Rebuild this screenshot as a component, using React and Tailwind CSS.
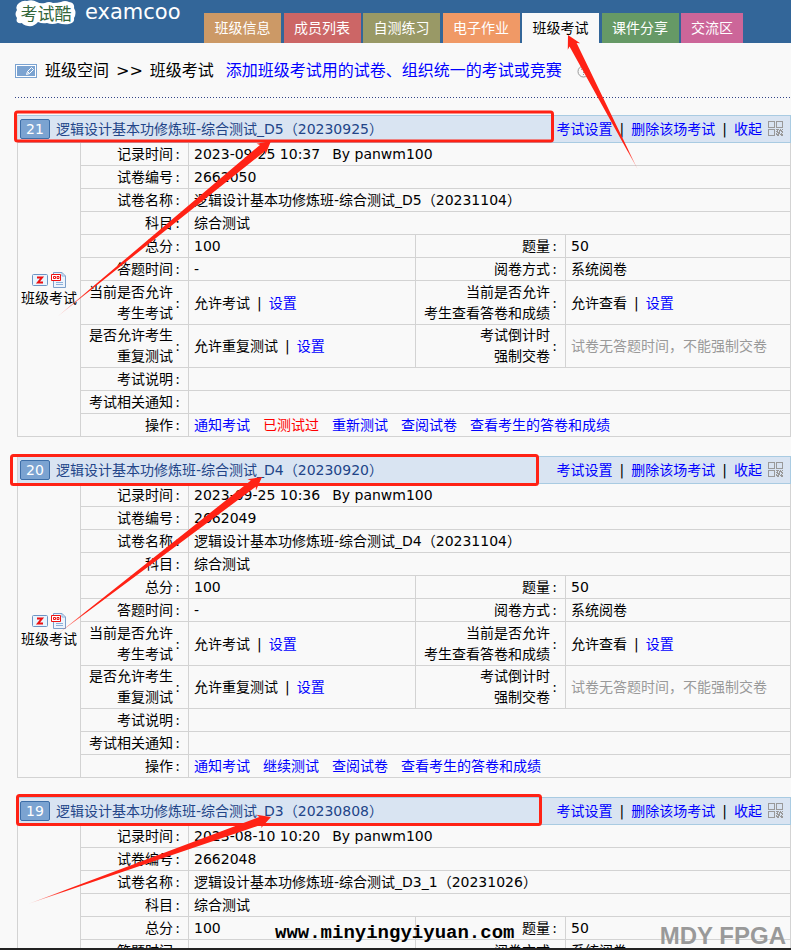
import React from "react";

const tabs = [
  { name: "班级信息", style: "w-[77px] bg-[#cc9966] text-white" },
  { name: "成员列表", style: "w-[77px] bg-[#cc6666] text-white" },
  { name: "自测练习", style: "w-[77px] bg-[#999966] text-white" },
  { name: "电子作业", style: "w-[77px] bg-[#f09966] text-white" },
  { name: "班级考试", style: "w-[77px] bg-[#f9f9f9] text-black" },
  { name: "课件分享", style: "w-[77px] bg-[#669966] text-white" },
  { name: "交流区", style: "w-[62px] bg-[#cc6699] text-white" },
];

const exams = [
  {
    no: 21,
    title: "逻辑设计基本功修炼班-综合测试_D5（20230925）",
    time: "2023-09-25 10:37",
    id: "2662050",
    paper: "逻辑设计基本功修炼班-综合测试_D5（20231104）",
    ops: ["通知考试", "已测试过", "重新测试", "查阅试卷", "查看考生的答卷和成绩"],
    full: true,
    sheet: "#555",
  },
  {
    no: 20,
    title: "逻辑设计基本功修炼班-综合测试_D4（20230920）",
    time: "2023-09-25 10:36",
    id: "2662049",
    paper: "逻辑设计基本功修炼班-综合测试_D4（20231104）",
    ops: ["通知考试", "继续测试", "查阅试卷", "查看考生的答卷和成绩"],
    full: true,
  },
  {
    no: 19,
    title: "逻辑设计基本功修炼班-综合测试_D3（20230808）",
    time: "2023-08-10 10:20",
    id: "2662048",
    paper: "逻辑设计基本功修炼班-综合测试_D3_1（20231026）",
    ops: [],
    full: false,
  },
];

const cell = "border-r border-b border-[#d3d3d3] p-0";

function A({ children, red }) {
  return (
    <a href="#" className={red ? "text-[#ff0000]" : "text-[#0000ff]"}>
      {children}
    </a>
  );
}

function Bar() {
  return <span className="px-[7px]">|</span>;
}

function Label({ children }) {
  return (
    <th scope="row" className={cell + " font-normal"}>
      <div className="flex items-center justify-end pr-[6px] text-right">
        <span className="leading-[21px]">{children}</span>
        <span className="w-[9px] text-center">:</span>
      </div>
    </th>
  );
}

function Value({ children, span }) {
  return (
    <td colSpan={span} className={cell}>
      <div className="truncate pl-[5px]">{children}</div>
    </td>
  );
}

function QrIcon() {
  return (
    <svg width="16" height="16" viewBox="0 0 16 16" fill="none" stroke="#999" shapeRendering="crispEdges">
      <path d="M.5.5h6v6h-6zM8.500.5h6v6h-6zM.5 8.500h6v6h-6z" />
      <path d="M8 8.500h3M12 8.500h1M14 8.500h1M9 9.500h1M11 9.500h3M8 10.500h2M11 10.500h1M13 10.500h2M9 11.500h3M14 11.500h1M8 12.500h1M10 12.500h2M13 12.500h1M8 13.500h3M12 13.500h3M9 14.500h2M13 14.500h2" />
    </svg>
  );
}

function ExamIcons() {
  return (
    <div className="flex justify-center gap-[3px]">
      <svg width="16" height="16" viewBox="0 0 16 16">
        <rect x=".5" y="2.500" width="15" height="11" rx="1" fill="#e8f5ff" stroke="#6c94c4" />
        <path d="M5 5.500h5L6 10.500h5" fill="none" stroke="#e11" strokeWidth="2" />
      </svg>
      <svg width="16" height="16" viewBox="0 0 16 16">
        <path d="M2.500.5h8.500l3.500 3.500v11.500h-12z" fill="#edf4fc" stroke="#7c9fca" />
        <path d="M11 .5v3.500h3.500M5 10.500h7M5 12.500h7" fill="none" stroke="#8fb0d8" />
        <path d="M.5 2.500h9v6h-9z" fill="#fff" stroke="#e11" />
        <path d="M2.500 4.500h2v2h-2zM6 4.500h2v2h-2z" fill="none" stroke="#e11" />
      </svg>
    </div>
  );
}

function Exam({ exam }) {
  return (
    <table className="w-full table-fixed border-separate border-spacing-0 border-l border-[#d3d3d3]">
      <colgroup>
        <col className="w-[63px]" />
        <col className="w-[108px]" />
        <col className="w-[227px]" />
        <col className="w-[150px]" />
        <col />
      </colgroup>
      <thead>
        <tr>
          <th colSpan={5} className="h-[28px] border-y border-r border-[#a9cbe2] bg-[#d9e4f2] p-0 font-normal">
            <div className="flex items-center pr-[6px] pl-[2px]">
              <span className="flex h-[20px] w-[30px] items-center justify-center rounded-[2px] border border-[#3d6ea8] bg-[#7ba3d1] text-white">
                {exam.no}
              </span>
              <span className="flex-1 truncate pl-[6px] text-left text-[#224488]">{exam.title}</span>
              <span className="flex items-center">
                <A>考试设置</A>
                <Bar />
                <A>删除该场考试</A>
                <Bar />
                <A>收起</A>
              </span>
              <span className="pl-[6px]">
                <QrIcon />
              </span>
            </div>
          </th>
        </tr>
      </thead>
      <tbody>
        <tr className="h-[23px]">
          <td rowSpan={exam.full ? 11 : 6} className={cell + " text-center align-middle"}>
            {exam.full && (
              <>
                <ExamIcons />
                <span>班级考试</span>
              </>
            )}
          </td>
          <Label>记录时间</Label>
          <Value span={3}>
            {exam.time}
            <span className="pl-[12px]">By panwm100</span>
          </Value>
        </tr>
        <tr className="h-[23px]">
          <Label>试卷编号</Label>
          <Value span={3}>{exam.id}</Value>
        </tr>
        <tr className="h-[23px]">
          <Label>试卷名称</Label>
          <Value span={3}>{exam.paper}</Value>
        </tr>
        <tr className="h-[23px]">
          <Label>科目</Label>
          <Value span={3}>综合测试</Value>
        </tr>
        <tr className="h-[23px]">
          <Label>总分</Label>
          <Value>100</Value>
          <Label>题量</Label>
          <Value>50</Value>
        </tr>
        <tr className="h-[23px]">
          <Label>答题时间</Label>
          <Value>-</Value>
          <Label>阅卷方式</Label>
          <Value>系统阅卷</Value>
        </tr>
        {exam.full && (
          <>
            <tr className="h-[44px]">
              <Label>
                当前是否允许
                <br />
                考生考试
              </Label>
              <Value>
                允许考试
                <Bar />
                <A>设置</A>
              </Value>
              <Label>
                当前是否允许
                <br />
                考生查看答卷和成绩
              </Label>
              <Value>
                允许查看
                <Bar />
                <A>设置</A>
              </Value>
            </tr>
            <tr className="h-[43px]">
              <Label>
                是否允许考生
                <br />
                重复测试
              </Label>
              <Value>
                允许重复测试
                <Bar />
                <A>设置</A>
              </Value>
              <Label>
                考试倒计时
                <br />
                强制交卷
              </Label>
              <Value>
                <span className="text-[#999]">试卷无答题时间，不能强制交卷</span>
              </Value>
            </tr>
            <tr className="h-[23px]">
              <Label>考试说明</Label>
              <Value span={3} />
            </tr>
            <tr className="h-[23px]">
              <Label>考试相关通知</Label>
              <Value span={3} />
            </tr>
            <tr className="h-[23px]">
              <Label>操作</Label>
              <Value span={3}>
                <span className="flex gap-[13px]">
                  {exam.ops.map((op) => (
                    <A key={op} red={op === "已测试过"}>
                      {op}
                    </A>
                  ))}
                </span>
              </Value>
            </tr>
          </>
        )}
      </tbody>
    </table>
  );
}

function Arrow({ id, from, to }) {
  const dx = to[0] - from[0];
  const dy = to[1] - from[1];
  const len = Math.hypot(dx, dy);
  const ux = dx / len;
  const uy = dy / len;
  const at = (back, side) => `${to[0] - ux * back - uy * side},${to[1] - uy * back + ux * side}`;
  return (
    <>
      <linearGradient id={id} gradientUnits="userSpaceOnUse" x1={from[0]} y1={from[1]} x2={to[0]} y2={to[1]}>
        <stop offset="0" stopColor="#ff2215" stopOpacity="0.2" />
        <stop offset="0.15" stopColor="#ff2215" />
      </linearGradient>
      <polygon
        fill={`url(#${id})`}
        points={[from.join(","), at(11, 4), at(13, 7), at(0, 0), at(13, -7), at(11, -4)].join(" ")}
      />
    </>
  );
}

function Annotations() {
  return (
    <svg className="pointer-events-none absolute top-0 left-0" width="791" height="950" viewBox="0 0 791 950">
      <g fill="none" stroke="#ff2215" strokeWidth="3">
        <rect x="15.500" y="112" width="537" height="29" rx="2" />
        <rect x="11.500" y="455.500" width="526" height="29" rx="2" />
        <rect x="17.500" y="795.500" width="523" height="29" rx="2" />
      </g>
      <Arrow id="a1" from={[57, 317]} to={[271, 141]} />
      <Arrow id="a2" from={[55, 636]} to={[262, 477]} />
      <Arrow id="a3" from={[28, 904]} to={[271, 817]} />
      <Arrow id="a4" from={[638, 170]} to={[568, 35]} />
    </svg>
  );
}

export default function App() {
  return (
    <div className="relative flex h-screen flex-col overflow-hidden bg-[#f9f9f9] font-['DejaVu_Sans','Noto_Sans_CJK_SC',sans-serif] text-[14px] leading-[20px] text-black">
      <header className="flex h-[43px] shrink-0 items-end bg-[#336699]">
        <div className="flex w-[204px] items-start self-start pl-[15px]">
          <div className="relative h-[27px] w-[62px]">
            <svg className="absolute inset-0" width="62" height="27" viewBox="0 0 62 27" fill="#fff">
              <path d="M4 3Q8 0 12 1Q17-1 22 2Q25 4 30 3Q34 1 38 3Q42 3 46 2Q50 0 54 2Q60 3 59 8Q62 13 59 18Q60 23 54 24Q49 25 43 23Q37 25 32 23Q27 24 23 22Q19 27 13 26Q8 25 7 23Q0 24 2 18Q-1 14 2 10Q0 6 4 3Z" />
            </svg>
            <span className="relative block pt-[4px] text-center text-[17px] leading-[20px] text-[#33663a]">考试酷</span>
          </div>
          <span className="pl-[8px] text-[21px] leading-[24px] text-white">examcoo</span>
        </div>
        <nav className="flex w-[539px] justify-between">
          {tabs.map((t) => (
            <a key={t.name} href="#" className={"flex h-[30px] items-center justify-center " + t.style}>
              {t.name}
            </a>
          ))}
        </nav>
      </header>

      <main className="min-h-0 flex-1 overflow-hidden">
        <div className="ml-[15px]">
          <div className="flex h-[54px] items-center pt-[2px] text-[16px]">
            <svg width="22" height="14" viewBox="0 0 22 14">
              <rect x=".5" y=".5" width="21" height="13" fill="#fff" stroke="#7ba3d1" />
              <rect x="2" y="2" width="18" height="10" fill="#7ba3d1" />
              <path d="M11.500 10.500l1-3 4-4 2 2-4 4zM12.500 7.500l2 2" fill="none" stroke="#fff" />
            </svg>
            <span className="flex gap-[7px] pl-[8px]">
              <span>班级空间</span>
              <span>&gt;&gt;</span>
              <span>班级考试</span>
            </span>
            <a href="#" className="pl-[12px] text-[#0000ff]">添加班级考试用的试卷、组织统一的考试或竞赛</a>
            <svg className="ml-[15px]" width="13" height="13" viewBox="0 0 13 13" fill="none" stroke="#999">
              <circle cx="6.500" cy="6.500" r="5.500" />
              <path d="M4.500 5q0-2 2-2t2 2q0 1-2 2v1M6.500 9v1" />
            </svg>
          </div>
          <div className="h-px bg-[repeating-linear-gradient(to_right,#334488_0_1px,transparent_1px_3px)]" />
        </div>
        <div className="flex flex-col gap-[19px] pt-[17px] pl-[17px]">
          {exams.map((e) => (
            <Exam key={e.no} exam={e} />
          ))}
        </div>
      </main>
      <div className="h-[2px] shrink-0 bg-[#222]" />

      <Annotations />
      <span className="absolute bottom-[7px] left-[275px] font-['Liberation_Mono',monospace] text-[19px] leading-[20px] font-bold">
        www.minyingyiyuan.com
      </span>
      <span className="absolute right-[5px] bottom-[2px] font-['Liberation_Sans',sans-serif] text-[24px] leading-[24px] font-black text-[#999]">
        MDY FPGA
      </span>
    </div>
  );
}
